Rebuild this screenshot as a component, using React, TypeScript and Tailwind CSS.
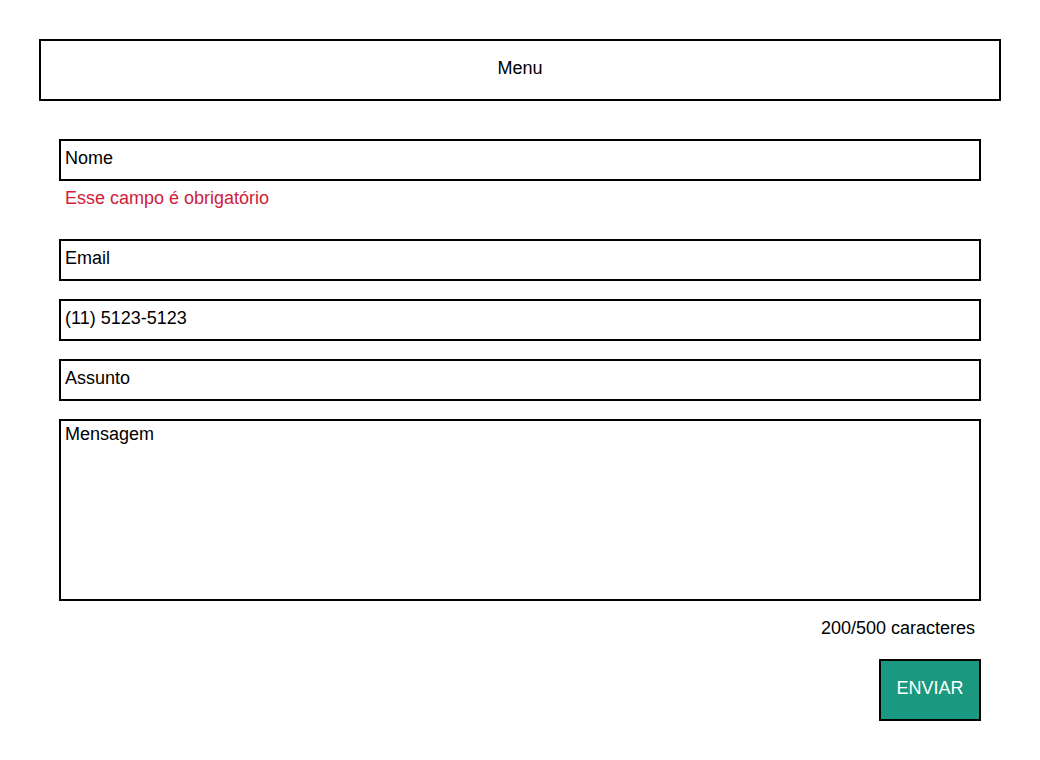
export default function App() {
  const fields = ["Email", "(11) 5123-5123", "Assunto"];

  return (
    <div className="min-h-screen bg-white text-black font-['Liberation_Sans',Arial,sans-serif] pt-[39px] pl-[39px]">
      {/* Menu */}
      <div className="w-[962px] h-[62px] border-2 border-black flex items-center justify-center pb-[3px] text-[18px]">
        Menu
      </div>

      {/* Form */}
      <div className="w-[922px] ml-[20px] mt-[38px] flex flex-col text-[18px]">
        <div className="h-[42px] border-2 border-black pl-[4px] pt-[7px] leading-[20px]">
          Nome
        </div>
        <div className="pl-[6px] pt-[7px] h-[58px] leading-[20px] text-[#d0203a]">
          Esse campo é obrigatório
        </div>

        {fields.map((f) => (
          <div
            key={f}
            className="h-[42px] mb-[18px] border-2 border-black pl-[4px] pt-[7px] leading-[20px]"
          >
            {f}
          </div>
        ))}

        <div className="h-[182px] border-2 border-black pl-[4px] pt-[3px] leading-[20px]">
          Mensagem
        </div>

        <div className="text-right pr-[6px] mt-[17px] leading-[20px]">
          200/500 caracteres
        </div>

        <div className="flex justify-end mt-[21px]">
          <button className="w-[102px] h-[62px] border-2 border-black bg-[#1b9880] text-white text-[18px] flex items-center justify-center pb-[3px]">
            ENVIAR
          </button>
        </div>
      </div>
    </div>
  );
}
